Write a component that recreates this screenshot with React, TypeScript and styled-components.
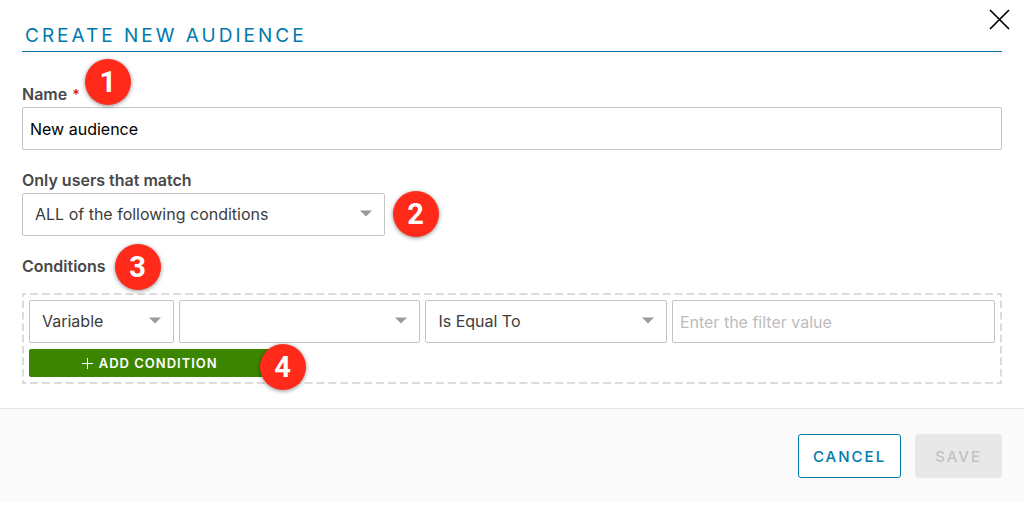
import React, { useState } from "react";
import styled, { createGlobalStyle } from "styled-components";

const GlobalStyle = createGlobalStyle`
  * { box-sizing: border-box; }
  body {
    margin: 0;
    background: #fff;
    color: #484848;
    font-family: Inter, "Liberation Sans", sans-serif;
    font-size: 16px;
  }
  button, input, select { font: inherit; }
`;

const Dialog = styled.form`
  position: relative;
  width: 100%;
`;

const Body = styled.div`
  padding: 20px 22px 24px;
`;

const Title = styled.h1`
  margin: 0 0 32px;
  padding: 0 3px;
  border-bottom: 1px solid #0072a3;
  color: #0079ad;
  font-size: 19px;
  font-weight: 400;
  line-height: 31px;
  letter-spacing: 3px;
`;

const CloseButton = styled.button`
  position: absolute;
  top: 9px;
  right: 14px;
  display: flex;
  padding: 0;
  border: 0;
  background: none;
  color: #000;
  cursor: pointer;
`;

const Field = styled.div`
  margin-bottom: 20px;
`;

const LabelRow = styled.div<{ $spacious?: boolean }>`
  position: relative;
  display: table;
  height: 23px;
  margin-bottom: ${(p) => (p.$spacious ? 14 : 0)}px;
  color: #484848;
  font-size: 16px;
  font-weight: 600;
  line-height: 20px;
`;

const Required = styled.span`
  margin-left: 5px;
  color: #e12200;
  font-size: 14px;
`;

const Badge = styled.span<{ $gap: number; $top: number }>`
  position: absolute;
  z-index: 1;
  top: ${(p) => p.$top}px;
  left: calc(100% + ${(p) => p.$gap}px);
  width: 46px;
  height: 46px;
  border-radius: 50%;
  background: #ff2a1a;
  box-shadow: 0 1px 4px rgba(0, 0, 0, 0.45);
  color: #fff;
  font-family: Roboto, "Liberation Sans", sans-serif;
  font-size: 29px;
  font-weight: 700;
  line-height: 46px;
  text-align: center;
`;

const TextInput = styled.input`
  display: block;
  width: 100%;
  min-width: 0;
  height: 43px;
  padding: 0 7px;
  border: 1px solid #c4c4c4;
  border-radius: 2px;
  background: #fff;
  color: #000;
  &::placeholder { color: #bcbcbc; opacity: 1; }
`;

const SelectWrap = styled.div<{ $width?: string }>`
  position: relative;
  width: ${(p) => p.$width ?? "auto"};
`;

const StyledSelect = styled.select`
  display: block;
  appearance: none;
  width: 100%;
  height: 43px;
  padding: 0 32px 2px 12px;
  border: 1px solid #c4c4c4;
  border-radius: 2px;
  background: #fff;
  color: #3c3c3c;
`;

const Arrow = styled.svg`
  position: absolute;
  top: 17px;
  right: 13px;
  pointer-events: none;
`;

const dashX = "linear-gradient(90deg, #dcdcdc 4px, transparent 4px, transparent 8px, #dcdcdc 8px)";
const dashY = "linear-gradient(180deg, #dcdcdc 4px, transparent 4px, transparent 8px, #dcdcdc 8px)";

const ConditionBox = styled.div`
  padding: 7px;
  background:
    ${dashX} left top / 12px 2px round no-repeat,
    ${dashX} left bottom / 12px 2px round no-repeat,
    ${dashY} left top / 2px 12px no-repeat round,
    ${dashY} right top / 2px 12px no-repeat round;
`;

const ConditionRow = styled.div`
  display: grid;
  grid-template-columns: 15% 25% 25% minmax(0, 1fr);
  gap: 5px;
  margin-bottom: 6px;
`;

const AddSlot = styled.div`
  position: relative;
  width: 25%;
`;

const AddButton = styled.button`
  display: flex;
  align-items: center;
  justify-content: center;
  gap: 6px;
  width: 100%;
  height: 28px;
  padding: 0;
  border: 0;
  border-radius: 2px;
  background: #3c8500;
  color: #fff;
  font-size: 13px;
  font-weight: 600;
  letter-spacing: 1px;
  white-space: nowrap;
`;

const Footer = styled.footer`
  display: flex;
  justify-content: flex-end;
  gap: 14px;
  padding: 25px 22px 24px;
  border-top: 1px solid #e6e6e6;
  background: #fafafa;
`;

const ActionButton = styled.button<{ $outlined?: boolean }>`
  height: 44px;
  padding: ${(p) => (p.$outlined ? "0 14px" : "0 20px")};
  border: ${(p) => (p.$outlined ? "1px solid #0079ad" : "0")};
  border-radius: 3px;
  background: ${(p) => (p.$outlined ? "#fff" : "#e8e8e8")};
  color: ${(p) => (p.$outlined ? "#0079ad" : "#c2c2c2")};
  font-size: 15px;
  font-weight: 500;
  letter-spacing: 2px;
`;

type SelectProps = { label?: string; id?: string; options: string[] };

function Select({ label, id, options }: SelectProps) {
  return (
    <SelectWrap>
      <StyledSelect id={id} aria-label={label}>
        {options.map((option) => (
          <option key={option}>{option}</option>
        ))}
      </StyledSelect>
      <Arrow width="12" height="7" viewBox="0 0 12 7" aria-hidden="true">
        <path d="M0 0.5H12L6 6.5Z" fill="#9a9a9a" />
      </Arrow>
    </SelectWrap>
  );
}

export default function App() {
  const [name, setName] = useState("New audience");
  return (
    <>
      <GlobalStyle />
      <Dialog onSubmit={(e) => e.preventDefault()}>
        <CloseButton type="button" aria-label="Close">
          <svg width="21" height="21" viewBox="0 0 21 21" fill="none" stroke="currentColor" strokeWidth="1.7">
            <path d="M1 1L20 20M20 1L1 20" />
          </svg>
        </CloseButton>
        <Body>
          <Title>CREATE NEW AUDIENCE</Title>
          <Field>
            <LabelRow>
              <label htmlFor="name">Name<Required>*</Required></label>
              <Badge $gap={5} $top={-25}>1</Badge>
            </LabelRow>
            <TextInput id="name" value={name} onChange={(e) => setName(e.target.value)} />
          </Field>
          <Field>
            <LabelRow as="label" htmlFor="match">Only users that match</LabelRow>
            <SelectWrap $width="37%">
              <Select id="match" options={["ALL of the following conditions", "ANY of the following conditions"]} />
              <Badge $gap={8} $top={-2}>2</Badge>
            </SelectWrap>
          </Field>
          <LabelRow $spacious>
            Conditions
            <Badge $gap={9} $top={-12}>3</Badge>
          </LabelRow>
          <ConditionBox>
            <ConditionRow>
              <Select label="Condition type" options={["Variable"]} />
              <Select label="Variable name" options={[""]} />
              <Select label="Operator" options={["Is Equal To"]} />
              <TextInput aria-label="Filter value" placeholder="Enter the filter value" />
            </ConditionRow>
            <AddSlot>
              <AddButton type="button">
                <svg width="11" height="11" viewBox="0 0 11 11" stroke="currentColor" strokeWidth="1" aria-hidden="true">
                  <path d="M5.5 0V11M0 5.5H11" />
                </svg>
                ADD CONDITION
              </AddButton>
              <Badge $gap={-11} $top={-5}>4</Badge>
            </AddSlot>
          </ConditionBox>
        </Body>
        <Footer>
          <ActionButton type="button" $outlined>CANCEL</ActionButton>
          <ActionButton type="submit" disabled>SAVE</ActionButton>
        </Footer>
      </Dialog>
    </>
  );
}
